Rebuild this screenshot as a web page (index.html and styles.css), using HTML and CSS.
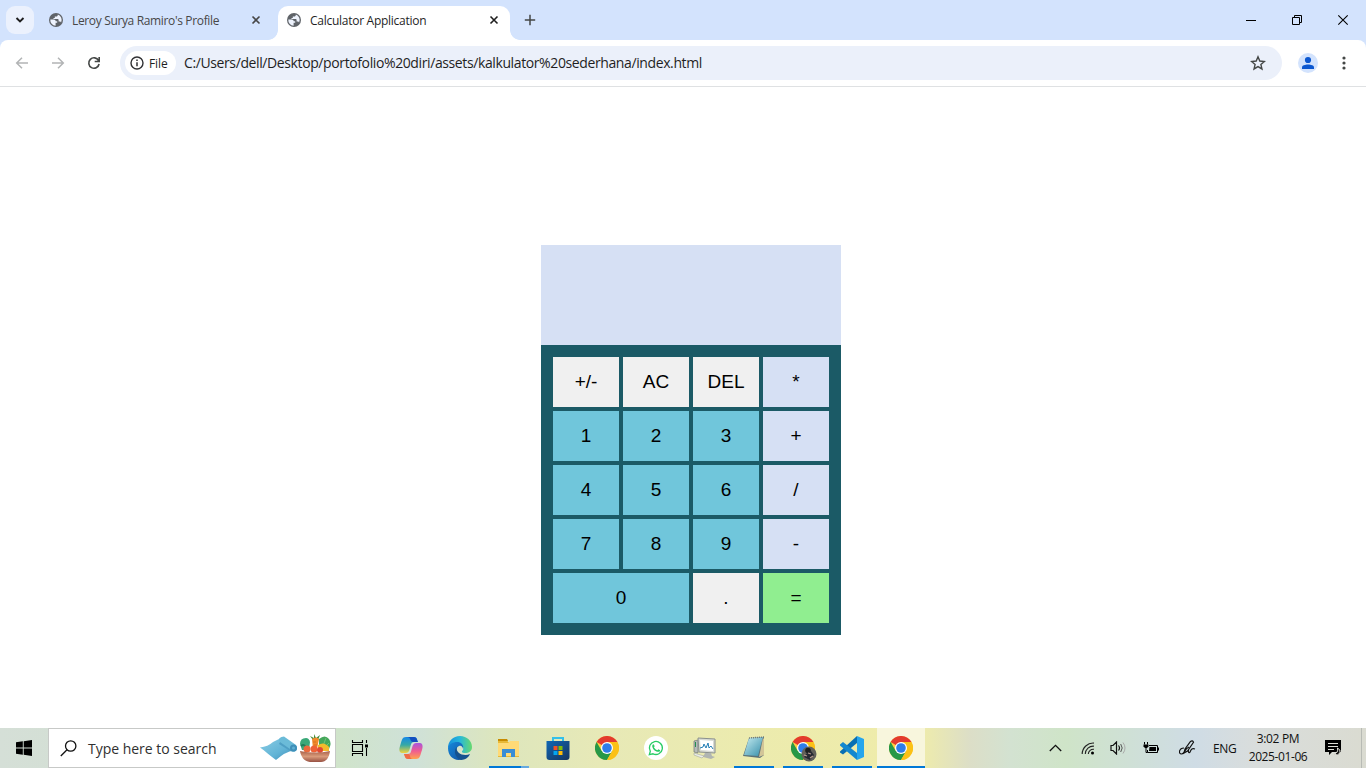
FILE: index.html
```html
<!DOCTYPE html>
<html lang="en">
<head>
<meta charset="utf-8">
<title>Calculator Application</title>
<link rel="stylesheet" href="styles.css">
</head>
<body>
<svg class="defs" width="0" height="0">
  <defs>
    <linearGradient id="edgeA" x1="0" y1="0" x2="1" y2="0"><stop offset="0" stop-color="#168fdc"/><stop offset=".5" stop-color="#27b8da"/><stop offset="1" stop-color="#68d96d"/></linearGradient>
    <linearGradient id="edgeB" x1="0" y1="0" x2="1" y2="1"><stop offset="0" stop-color="#1689dc"/><stop offset="1" stop-color="#124f9c"/></linearGradient>
    <linearGradient id="copA" x1="0" y1="0" x2="0" y2="1"><stop offset="0" stop-color="#1688e8"/><stop offset=".5" stop-color="#35a9a5"/><stop offset="1" stop-color="#f2d23c"/></linearGradient>
    <linearGradient id="copB" x1="0" y1="0" x2="0" y2="1"><stop offset="0" stop-color="#a855dd"/><stop offset=".5" stop-color="#ef5c91"/><stop offset="1" stop-color="#ffa34e"/></linearGradient>
    <linearGradient id="store" x1="0" y1="0" x2="1" y2="1"><stop offset="0" stop-color="#1067b4"/><stop offset="1" stop-color="#17345f"/></linearGradient>
    <linearGradient id="note" x1="0" y1="0" x2="1" y2="1"><stop offset="0" stop-color="#c9eef2"/><stop offset="1" stop-color="#348eaa"/></linearGradient>
    <linearGradient id="mat" x1="0" y1="0" x2="1" y2="1"><stop offset="0" stop-color="#8bcde4"/><stop offset=".6" stop-color="#62b4d6"/><stop offset="1" stop-color="#3d8ab5"/></linearGradient>
    <linearGradient id="bowl" x1="0" y1="0" x2="0" y2="1"><stop offset="0" stop-color="#a8614a"/><stop offset=".5" stop-color="#d99a7a"/><stop offset="1" stop-color="#975143"/></linearGradient>
    <symbol id="globe" viewBox="0 0 16 16"><circle cx="8" cy="8" r="7" fill="#5f6368"/><path d="M2.300 7.400h3.400c1.300 0 2 .8 2 1.900h1.500v1.500H7.600v2.900A5.800 5.800 0 0 1 2.300 7.400zM9.800 2.500v.6c0 .9-.7 1.500-1.500 1.500H6.800v1.500H5.500v1h4.300c.5 0 .8.400.8.800v1.600h.9c.8 0 1.400.5 1.600 1.100A5.900 5.900 0 0 0 9.800 2.500z" fill="#eef3fd"/></symbol>
    <symbol id="close" viewBox="0 0 10 10"><path d="M1.500 1.500l7 7m0-7l-7 7" fill="none" stroke="currentColor" stroke-width="1.600"/></symbol>
    <symbol id="chrome" viewBox="0 0 24 24"><circle cx="12" cy="12" r="12" fill="#ffcd40"/><path d="M12 12L1.600 6A12 12 0 0 1 22.400 6H12z" fill="#e33b2e"/><path d="M1.600 6A12 12 0 0 0 12 24l5.200-9L12 12 6.800 15z" fill="#279847"/><path d="M12 24A12 12 0 0 0 22.400 6H12l5.200 9z" fill="#fbc116"/><circle cx="12" cy="12" r="6" fill="#fff"/><circle cx="12" cy="12" r="4.800" fill="#2f7de9"/></symbol>
  </defs>
</svg>

<header class="browser">
  <div class="tabstrip">
    <button class="tab-search" aria-label="Search tabs"><svg width="10" height="8" viewBox="0 0 10 8"><path d="M1.500 2L5 5.500 8.500 2" fill="none" stroke="#1f1f1f" stroke-width="1.900"/></svg></button>
    <div class="tab">
      <svg width="16" height="16"><use href="#globe"/></svg>
      <span class="tab-title first-title">Leroy Surya Ramiro's Profile</span>
      <svg class="tab-close" width="10" height="10"><use href="#close"/></svg>
    </div>
    <div class="tab active">
      <svg width="16" height="16"><use href="#globe"/></svg>
      <span class="tab-title second-title">Calculator Application</span>
      <svg class="tab-close" width="10" height="10"><use href="#close"/></svg>
    </div>
    <svg class="new-tab" width="12" height="12" viewBox="0 0 12 12"><path d="M6 .8v10.400M.8 6h10.400" stroke="#444746" stroke-width="1.500"/></svg>
    <div class="window-buttons">
      <svg width="46" height="40" viewBox="0 0 46 40"><path d="M18 20.500h10" stroke="#000"/></svg>
      <svg width="46" height="40" viewBox="0 0 46 40"><path d="M18.500 17.500h7v7h-7zM20.500 17.500v-2h7v7h-2" fill="none" stroke="#000"/></svg>
      <svg width="46" height="40" viewBox="0 0 46 40"><path d="M18.300 15.300l9.400 9.400m0-9.400l-9.400 9.400" fill="none" stroke="#000" stroke-width="1.100"/></svg>
    </div>
  </div>
  <div class="toolbar">
    <div class="nav">
      <svg width="16" height="16" viewBox="0 0 16 16"><path d="M14 8H3M8 2.700L2.700 8 8 13.300" fill="none" stroke="#b2b4b5" stroke-width="1.500"/></svg>
      <svg width="16" height="16" viewBox="0 0 16 16"><path d="M2 8h11M8 2.700L13.300 8 8 13.300" fill="none" stroke="#b2b4b5" stroke-width="1.500"/></svg>
      <svg width="16" height="16" viewBox="0 0 16 16"><path d="M12.600 5.600A5.200 5.200 0 1 0 13.100 9M13.200 2v4.500H8.700" fill="none" stroke="#444746" stroke-width="1.600"/></svg>
    </div>
    <div class="omnibox">
      <div class="file-chip">
        <svg width="14" height="14" viewBox="0 0 14 14"><circle cx="7" cy="7" r="6" fill="none" stroke="#303134" stroke-width="1.400"/><path d="M7 6.200v4M7 3.500v1.500" stroke="#303134" stroke-width="1.500"/></svg>
        <span>File</span>
      </div>
      <span class="url">C:/Users/dell/Desktop/portofolio%20diri/assets/kalkulator%20sederhana/index.html</span>
      <svg class="star" width="16" height="16" viewBox="0 0 16 16"><path d="M8 1.800l1.800 4.250 4.600.4-3.500 3 1.050 4.500L8 11.550l-3.950 2.400 1.050-4.500-3.500-3 4.600-.4z" fill="none" stroke="#444746" stroke-width="1.400"/></svg>
    </div>
    <div class="avatar"><svg width="14" height="14" viewBox="0 0 14 14"><circle cx="7" cy="4" r="3.100" fill="#0b57d0"/><path d="M1 13v-1.700C1 9.300 4 8.400 7 8.400s6 .9 6 2.900V13z" fill="#0b57d0"/></svg></div>
    <svg class="menu" width="4" height="16" viewBox="0 0 4 16"><circle cx="2" cy="3" r="1.600"/><circle cx="2" cy="8" r="1.600"/><circle cx="2" cy="13" r="1.600"/></svg>
  </div>
</header>

<main class="page">
  <section class="calculator">
    <div class="display"></div>
    <div class="keys">
      <button class="key">+/-</button><button class="key">AC</button><button class="key">DEL</button><button class="key operator">*</button>
      <button class="key number">1</button><button class="key number">2</button><button class="key number">3</button><button class="key operator">+</button>
      <button class="key number">4</button><button class="key number">5</button><button class="key number">6</button><button class="key operator">/</button>
      <button class="key number">7</button><button class="key number">8</button><button class="key number">9</button><button class="key operator">-</button>
      <button class="key number zero">0</button><button class="key">.</button><button class="key equals">=</button>
    </div>
  </section>
</main>

<footer class="taskbar">
  <div class="start"><svg width="16" height="16" viewBox="0 0 16 16"><path d="M0 2.300L6.800 1.300v6.300H0zM7.700 1.200L16 0v7.600H7.700zM0 8.400h6.800v6.300L0 13.700zM7.700 8.400H16V16l-8.300-1.200z"/></svg></div>
  <div class="search">
    <svg width="17" height="17" viewBox="0 0 17 17"><circle cx="10.700" cy="6" r="5.200" fill="none" stroke="#111" stroke-width="1.300"/><path d="M7 9.700L.8 16" stroke="#111" stroke-width="1.300"/></svg>
    <span>Type here to search</span>
    <svg class="search-art" width="74" height="30" viewBox="0 0 74 30">
      <path d="M1 14.500q8-1 13-5.500l8-4 13 12q-9 2-18 10C11 23 6 18 1 14.500z" fill="url(#mat)"/>
      <path d="M20 8q-1-4 5-4.500L37 12q3 5-2 7z" fill="#6bbbd8"/><path d="M21 9l14 10-4-1-11-7z" fill="#4f9fc4"/><circle cx="34.500" cy="15" r="3.500" fill="#3f8fb9"/><circle cx="34.500" cy="15" r="1.500" fill="#5fb0d2"/>
      <path d="M41 11q0-6 6-6 3 0 4 4l-1 8h-7z" fill="#3aa878"/><path d="M60 6q6-5 10 0 3 4 0 10l-10-2z" fill="#45a75b"/><path d="M42 13q4-3 6 4" fill="none" stroke="#217c59" stroke-width="2"/><path d="M64 13l3-8m-1 9l4-4" stroke="#70c477"/><path d="M54 7l-3-4 4 2 0-4 2 4 4-3-2 5" fill="#468d37"/><path d="M53 6q4-3 7 0l-2 10h-4z" fill="#f18a2b"/><path d="M54 9h3m-2 3h3" stroke="#c9661c" stroke-width=".7"/><path d="M59 12q6-4 11 2v4H59z" fill="#f3bb2b"/><circle cx="48" cy="16" r="3.500" fill="#ea6a3c"/><circle cx="55" cy="16" r="3.500" fill="#ee6137"/><circle cx="61" cy="17" r="3" fill="#e04a34"/><path d="M41 18q15 3 30 0c-1 7-4 11-9 11H51c-6-1-9-5-10-11z" fill="url(#bowl)"/>
    </svg>
  </div>
  <div class="task"><svg width="18" height="16" viewBox="0 0 18 16"><path d="M1.500 0v2.500h10V0M1.500 16v-2.500h10V16M1.500 4.500v7h10v-7zM15.500 0v3M15.500 8v8" fill="none" stroke="#000" stroke-width="1.100"/><path d="M14 4.500h3v3h-3z"/></svg></div>
  <div class="apps">
    <div class="app"><svg width="24" height="24" viewBox="0 0 24 24"><path d="M7 1h8c3 0 3 3 4 5h-4c-3 0-3 3-4 6-1 4-2 5-5 5H3c-3 0-3-4-2-7C3 4 3 1 7 1z" fill="url(#copA)"/><path d="M17 23H9c-3 0-3-3-4-5h4c3 0 3-3 4-6 1-4 2-5 5-5h3c3 0 3 4 2 7-2 6-2 9-6 9z" fill="url(#copB)"/><path d="M8 1h7c3 0 3 3 4 5h-5C11 6 12 1 8 1z" fill="#134fc0"/><path d="M5 18h4c3 0 1 5 5 5H9c-3 0-3-3-4-5z" fill="#ef6b45"/></svg></div>
    <div class="app"><svg width="24" height="24" viewBox="0 0 24 24"><path d="M0 12C0 5 5 0 12 0s12 5 12 11c0 4-3 6-7 6-3 0-4-1-2-3 1-2 0-6-5-6-5 0-8 2-10 4z" fill="url(#edgeA)"/><path d="M0 12c1-4 5-6 9-6 5 0 7 4 6 7 0-2-2-4-4-3-5 2-3 11 6 12-8 5-17 0-17-10z" fill="url(#edgeB)"/><path d="M9 11c-4 3-2 11 4 13 4 0 8-3 9-6-6 3-15-1-13-7z" fill="#15528f"/></svg></div>
    <div class="app running grouped"><svg width="24" height="24" viewBox="0 0 24 24"><path d="M1 3h9l1 3h11v15H1z" fill="#e7b837"/><path d="M1 3h9l1 2H1z" fill="#c88b00"/><path d="M1 7h10l2-2h9v15H1z" fill="#ffda76"/><path d="M5 13h13v8h-4v-4H9v4H5z" fill="#398dd5"/></svg></div>
    <div class="app"><svg width="24" height="24" viewBox="0 0 24 24"><path d="M7 6V2h10v4" fill="none" stroke="#34c0ea" stroke-width="2"/><path d="M.5 5h23v16q0 3-3 3h-17q-3 0-3-3z" fill="url(#store)"/><path d="M7.500 10h4v4h-4z" fill="#f35325"/><path d="M12.500 10h4v4h-4z" fill="#81bc06"/><path d="M7.500 15h4v4h-4z" fill="#05a6f0"/><path d="M12.500 15h4v4h-4z" fill="#ffba08"/></svg></div>
    <div class="app"><svg width="24" height="24"><use href="#chrome"/></svg></div>
    <div class="app"><svg width="24" height="24" viewBox="0 0 24 24"><circle cx="12" cy="12" r="12" fill="#fff"/><path d="M5.300 18.700l1-3.400A6.500 6.500 0 1 1 9 17.800z" fill="none" stroke="#28cc65" stroke-width="1.300"/><path d="M9.700 8.300l1 2-.8 1c1 1.700 2 2.500 3.500 3l1-1 1.800.9c0 3-7 1.700-8-4 0-1 .8-2 1.500-1.900z" fill="#28cc65"/></svg></div>
    <div class="app"><svg width="24" height="24" viewBox="0 0 24 24"><path d="M1 5l4-1v13l-4-1z" fill="#b6bbb8" stroke="#707775" stroke-width=".7"/><path d="M2.500 6v5" stroke="#258d50"/><path d="M5 2l17 1v14L6 16z" fill="#d8dbd5" stroke="#8a908e"/><path d="M7 4l13 1v10L8 14z" fill="#fff"/><path d="M7 12l3-1 1-3 2 4 2-5 1 5 2-2 2 3" fill="none" stroke="#237eb5"/><path d="M12 17h6l1 3 3 1-4 2-8-2z" fill="#b0b5b1"/><path d="M1 17l10 3-2 2-8-3z" fill="#eceee7" stroke="#949a97" stroke-width=".5"/></svg></div>
    <div class="app running"><svg width="24" height="24" viewBox="0 0 24 24"><path d="M7 2l15-1v18l-4 3-17-2z" fill="#5b7176"/><path d="M7 2l14-1-5 19-14-1z" fill="url(#note)"/><path d="M21 2l1 1v16l-5 2z" fill="#d2c598"/><path d="M7 2l15-1" stroke="#747d79" stroke-width="1.500" stroke-dasharray="1 1"/></svg></div>
    <div class="app running"><svg class="profile-chrome" width="26" height="26" viewBox="0 0 26 26"><svg width="24" height="24"><use href="#chrome"/></svg><circle cx="18" cy="18" r="7.500" fill="#62615a"/><circle cx="17" cy="14.500" r="2.800" fill="#1e1f20"/><path d="M13 21l3-4 4-2 3 4-4 5z" fill="#252831"/><path d="M13 19l3 1m1-3l3 1m-1 4l3-2" stroke="#b7988c" stroke-width="1.300"/></svg></div>
    <div class="app running"><svg width="24" height="24" viewBox="0 0 24 24"><path d="M17 0v7L3 18.500l-3-2v-1L17 0z" fill="#086fb3"/><path d="M0 8.500L3 6l14 11v7L0 9.500z" fill="#1388cf"/><path d="M17 0l7 3v18l-7 3z" fill="#25a5ed"/></svg></div>
    <div class="app running current"><svg width="24" height="24"><use href="#chrome"/></svg></div>
  </div>
  <div class="tray">
    <svg class="chevron" width="13" height="8" viewBox="0 0 13 8"><path d="M.8 7L6.500 1.300 12.200 7" fill="none" stroke="#111" stroke-width="1.300"/></svg>
    <svg class="wifi" width="14" height="14" viewBox="0 0 14 14"><path d="M1.200 13A11 11 0 0 1 13 2.100M4.300 13A8 8 0 0 1 13 5.200M7.300 13A5 5 0 0 1 13 8.300" fill="none" stroke="#222" stroke-width="1.100"/><circle cx="11.500" cy="12" r="1.500"/></svg>
    <svg class="sound" width="17" height="14" viewBox="0 0 17 14"><path d="M1 4.500h2L6.500 1v12L3 9.500H1zM8.500 4.500q2 2.500 0 5" fill="none" stroke="#111" stroke-width="1.200"/><path d="M10.700 3q3 4 0 8" fill="none" stroke="#555"/><path d="M13 1.500q4 5.500 0 11" fill="none" stroke="#aaa"/></svg>
    <svg class="battery" width="16" height="13" viewBox="0 0 16 13"><path d="M6 3.500h8.500v7h-10V8M15.500 5.500v3M1.500 0v2.500M4.500 0v2.500M3 5v5.500h1.500" fill="none" stroke="#000"/><path d="M.5 2.500h5v2L4 6H2L.5 4.500z"/><path d="M6.500 5H13v4H6z"/></svg>
    <svg class="pen" width="17" height="16" viewBox="0 0 17 16"><path d="M5 13L6 9l5.500-7.500q2-1.500 3 .8L8.500 11zM5 8c-5 0-6 6-2.500 6C6 14 5 9 10 7M9.500 10c-.5 3 1 4 2.500 0q1-2 4-1" fill="none" stroke="#111" stroke-width="1.200"/></svg>
    <span class="language">ENG</span>
    <div class="clock"><span>3:02 PM</span><span class="date">2025-01-06</span></div>
    <svg class="notice" width="17" height="17" viewBox="0 0 17 17"><path d="M0 0h16v12H7l-3 3v-3H0z"/><path d="M3 3.500h10M3 6.500h10M3 9.500h6" stroke="#deded6"/><path d="M12.500 8q3.500 1.500 2.500 5-2.500 3.500-6 1 4.500-1 3.500-6z" fill="#111" stroke="#deded6"/></svg>
    <div class="show-desktop"></div>
  </div>
</footer>
</body>
</html>
```
FILE: styles.css
```css
* { box-sizing: border-box; }
body { margin: 0; width: 1366px; height: 768px; overflow: hidden; display: flex; flex-direction: column; font-family: "Open Sans", "Noto Sans", sans-serif; background: #fff; color: #1f1f1f; }
button { border: 0; padding: 0; font: inherit; }
svg { flex: none; display: block; }
.defs { position: absolute; }
.browser { height: 87px; flex: none; background: #d3e3fd; }
.tabstrip { height: 40px; display: flex; align-items: center; padding-left: 6px; }
.tab-search { width: 28px; height: 28px; border-radius: 9px; background: #ebf1fd; display: flex; align-items: center; justify-content: center; }
.tab { width: 238px; height: 34px; margin: 6px 0 0 6px; padding: 0 17px 6px 8px; display: flex; align-items: center; gap: 8px; position: relative; font-size: 12px; white-space: nowrap; color: #474747; }
.tab.active { width: 232px; margin-left: 0; padding-right: 11px; background: #fff; border-radius: 10px 10px 0 0; color: #1f1f1f; }
.active::before, .active::after { content: ""; position: absolute; bottom: 0; width: 10px; height: 10px; }
.active::before { left: -10px; background: radial-gradient(circle at 0 0, transparent 9.5px, #fff 10.2px); }
.active::after { right: -10px; background: radial-gradient(circle at 100% 0, transparent 9.5px, #fff 10.2px); }
.tab-close { margin-left: auto; color: #474747; }
.active .tab-close { color: #1f1f1f; }
.tab-title { line-height: 18px; }
.first-title { letter-spacing: -.35px; }
.second-title { letter-spacing: -.27px; }
.tab-title { padding-top: 1px; }
.new-tab { margin-left: 14px; }
.window-buttons { margin-left: auto; display: flex; }
.toolbar { height: 47px; display: flex; align-items: center; background: #fff; border-radius: 8px 8px 0 0; border-bottom: 1px solid #dfe1e3; padding-left: 14px; }
.nav { display: flex; gap: 20px; width: 106px; }
.omnibox { width: 1162px; height: 34px; border-radius: 17px; background: #ebf0fa; display: flex; align-items: center; padding-left: 5px; }
.file-chip { width: 51px; height: 24px; border-radius: 12px; background: #fff; display: flex; align-items: center; gap: 5px; padding-left: 5px; font-size: 12px; font-weight: 500; letter-spacing: -.1px; }
.url { margin-left: 8px; padding-bottom: 1px; font-size: 14px; letter-spacing: -.39px; white-space: nowrap; }
.star { margin-left: auto; margin-right: 16px; }
.avatar { width: 20px; height: 20px; margin-left: 16px; border-radius: 50%; background: #d3e3fd; display: flex; align-items: center; justify-content: center; }
.menu { margin-left: 24px; fill: #444746; }

.page { height: 641px; flex: none; padding: 158px 0 0 541px; }
.calculator { width: 300px; }
.display { height: 100px; background: #d6e0f4; }
.keys { height: 290px; padding: 12px; display: grid; grid-template-columns: repeat(4, 66px); grid-template-rows: repeat(5, 50px); gap: 4px; background: #1b5a66; }
.key { background: #f0f0f0; color: #000; font: 19px "Liberation Sans", Arial, sans-serif; padding-bottom: 1px; }
.number { background: #70c6db; }
.operator { background: #d6e0f4; }
.equals { background: #90ee90; }
.zero { grid-column: span 2; }

.taskbar { height: 40px; flex: none; display: flex; background: linear-gradient(90deg, #d5dfd7 0, #d2e0d2 150px, #d0e4ca 335px, #cfe1d8 415px, #dde6bd 500px, #e7e9b7 600px, #ecebae 750px, #efecaa 920px, #dcdec7 970px, #d3e2d1 1010px, #cfe4c8 1065px, #cfe0d6 1130px, #cfdce5 1195px, #d9dddc 1255px, #dadbd1 1366px); }
.start, .task { width: 48px; display: flex; align-items: center; justify-content: center; }
.search { width: 288px; display: flex; align-items: center; background: #fff; border: 1px solid #c7c9c7; padding-left: 11px; font-size: 14px; letter-spacing: -.02px; white-space: nowrap; color: #303030; }
.search span { margin-left: 11px; }
.search-art { margin-left: auto; margin-right: 2px; }
.apps { display: flex; gap: 1px; margin-left: 3px; }
.app { width: 48px; display: flex; align-items: center; justify-content: center; position: relative; }
.running::after { content: ""; position: absolute; left: 4px; right: 4px; bottom: 0; height: 2px; background: #0078d7; }
.grouped::after { background: linear-gradient(90deg, #0078d7 80%, #66a9df 80%); }
.profile-chrome { margin: 2px 0 0 2px; }
.current { background: #f8f6dd; }
.current::after { left: 0; right: 0; }
.tray { flex: 1; display: flex; align-items: center; font-size: 12px; white-space: nowrap; color: #111; }
.chevron { margin-left: 124px; }
.wifi { margin-left: 19px; }
.sound { margin-left: 15px; }
.battery { margin-left: 16px; }
.pen { margin-left: 20px; }
.language { width: 24px; margin-left: 17px; letter-spacing: -.4px; }
.clock { width: 64px; margin-left: 9px; display: flex; flex-direction: column; align-items: center; line-height: 18px; letter-spacing: -.35px; }
.date { letter-spacing: -.4px; }
.notice { margin-left: 15px; }
.show-desktop { width: 5px; height: 40px; border-left: 1px solid #b8bbb5; margin-left: auto; }
```
